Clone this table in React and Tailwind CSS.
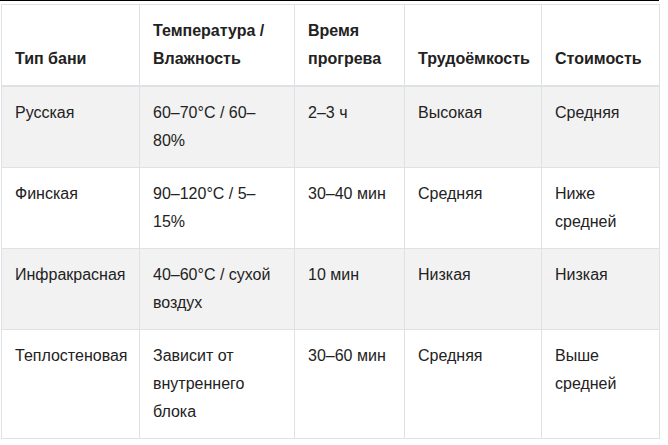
const headers = ["Тип бани", "Температура / Влажность", "Время прогрева", "Трудоёмкость", "Стоимость"];

const rows = [
  ["Русская", "60–70°C / 60–80%", "2–3 ч", "Высокая", "Средняя"],
  ["Финская", "90–120°C / 5–15%", "30–40 мин", "Средняя", "Ниже средней"],
  ["Инфракрасная", "40–60°C / сухой воздух", "10 мин", "Низкая", "Низкая"],
  ["Теплостеновая", "Зависит от внутреннего блока", "30–60 мин", "Средняя", "Выше средней"],
];

const widths = ["w-[138px]", "w-[155px]", "w-[110px]", "w-[137px]", "w-[118px]"];

export default function App() {
  return (
    <div className="bg-white min-h-[445px] font-['Liberation_Sans',Arial,sans-serif] text-[16px] leading-[28px] text-[#222]">
      <div className="w-[659px] h-px bg-black" />
      <table className="mt-[3px] ml-[1px] w-[658px] table-fixed border-collapse">
        <colgroup>
          {widths.map((w, i) => (
            <col key={i} className={w} />
          ))}
        </colgroup>
        <thead>
          <tr className="border-b-2 border-[#dfe2e5]">
            {headers.map((h) => (
              <th
                key={h}
                className="border border-[#dfe2e5] px-[13px] py-3 text-left align-bottom font-bold"
              >
                {h}
              </th>
            ))}
          </tr>
        </thead>
        <tbody>
          {rows.map((r, i) => (
            <tr key={i} className={i % 2 === 0 ? "bg-[#f2f2f2]" : "bg-white"}>
              {r.map((c, j) => (
                <td key={j} className="border border-[#dfe2e5] px-[13px] py-3 align-top">
                  {c}
                </td>
              ))}
            </tr>
          ))}
        </tbody>
      </table>
    </div>
  );
}
